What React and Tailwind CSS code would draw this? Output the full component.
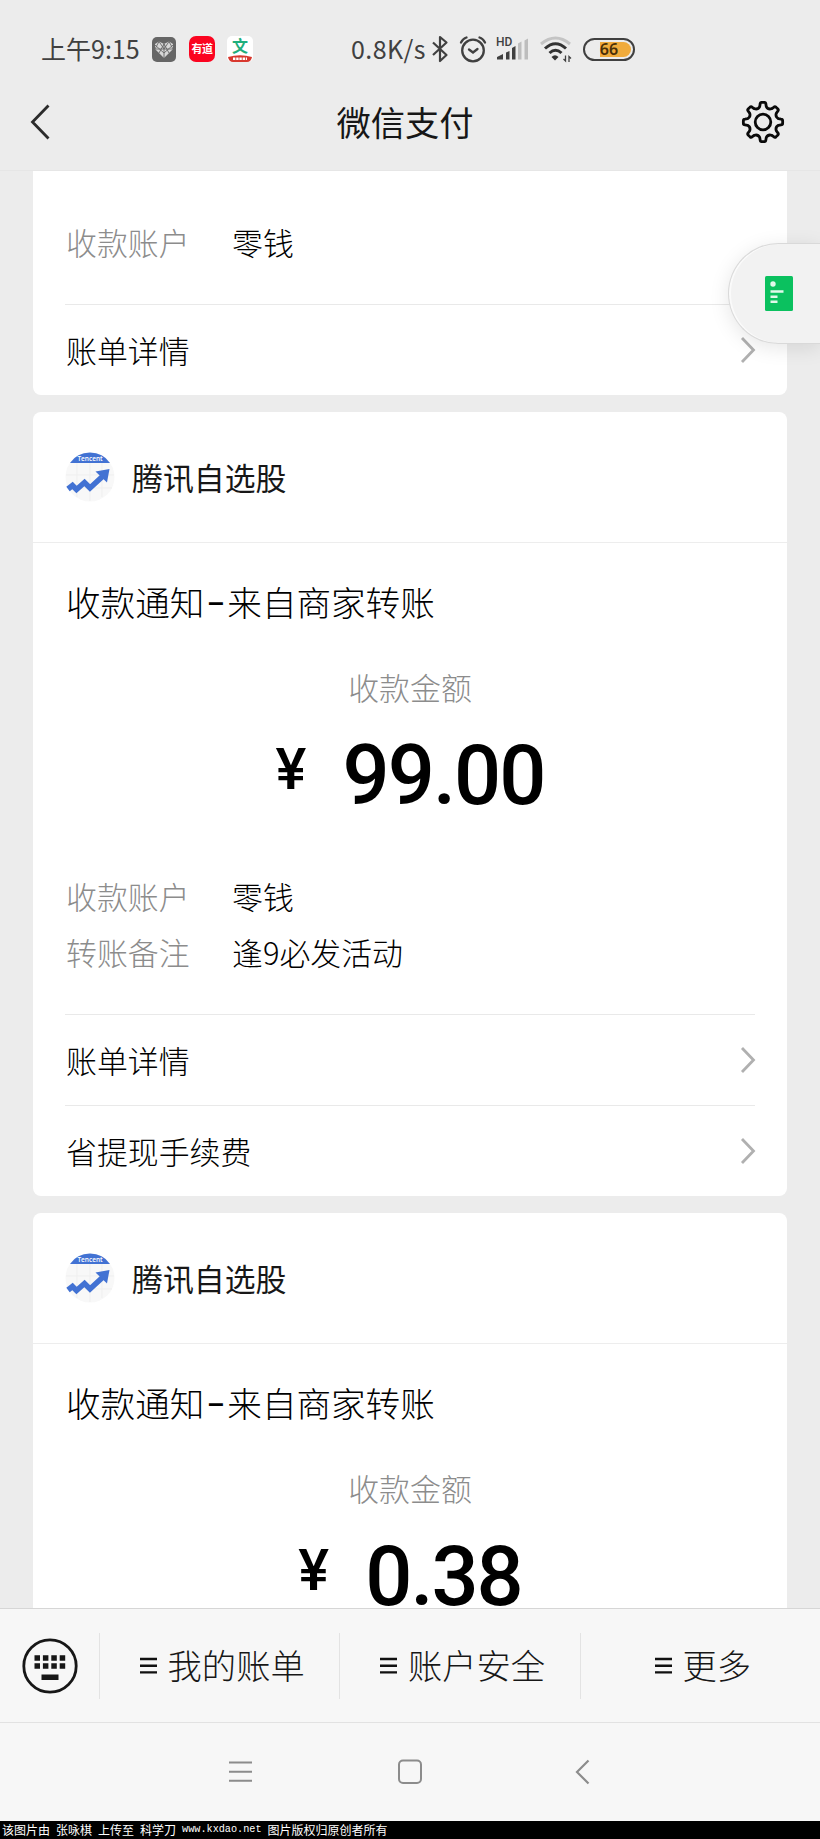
import React from 'react';

const GEAR_TEETH = [0, 45, 90, 135, 180, 225, 270, 315];

function polar(radius, degrees) {
    const a = (degrees * Math.PI) / 180;
    return `${(radius * Math.sin(a)).toFixed(2)} ${(-radius * Math.cos(a)).toFixed(2)}`;
}

const gearPath = GEAR_TEETH.map((deg, i) => (
    `${i === 0 ? 'M' : 'L'}${polar(18.2, deg - 9)} Q${polar(19.8, deg - 8)} ${polar(19.7, deg - 4)} L${polar(19.7, deg + 4)} Q${polar(19.8, deg + 8)} ${polar(18.2, deg + 9)} L${polar(15.8, deg + 12)} Q${polar(13.2, deg + 22.5)} ${polar(15.8, deg + 33)}`
)).join(' ') + ' Z';

function GearIcon() {
    return (
        <svg className="w-[44px] h-[44px]" viewBox="-22 -22 44 44" fill="none" stroke="#0a0a0a" strokeWidth="2.8" strokeLinejoin="round">
            <path d={gearPath} />
            <circle r="7.8" />
        </svg>
    );
}

function StatusBar() {
    return (
        <div className="h-[98px] shrink-0 flex items-center pl-[41px] text-[25px] text-[#404040] font-normal">
            <span className="w-[98px] whitespace-nowrap pb-[2px]">上午9:15</span>
            <svg className="w-[24px] h-[25px] ml-[13px]" viewBox="0 0 24 25">
                <rect width="24" height="25" rx="5" fill="#666" />
                <path d="M12 21 L3 12 V7 L7 4.500 L12 7 L17 4.500 L21 7 V12 Z" fill="#d8d8d8" />
                <path d="M3 12 L7 4.500 L12 12 L17 4.500 L21 12 M3 8 L12 16 L21 8 M7 16 L12 7 L17 16 M3 12 H21 M12 7 V21" stroke="#666" strokeWidth="0.9" fill="none" />
            </svg>
            <div className="w-[26px] h-[26px] ml-[13px] rounded-[7px] bg-[#fb0420] text-white text-[11px] font-bold leading-[25px] text-center tracking-[-0.5px]">有道</div>
            <div className="w-[26px] h-[26px] ml-[12px] rounded-[5px] bg-white flex flex-col items-center">
                <span className="h-[19px] text-[16px] font-bold leading-[19px] text-[#1fae7c]">文</span>
                <svg className="w-[26px] h-[7px]" viewBox="0 0 26 7">
                    <path d="M1 2 Q13 -1.500 25 2 Q24 7 20 7 H6 Q2 7 1 2" fill="#d8382e" />
                    <path d="M6 3.800 H20" stroke="#fff" strokeWidth="2.400" strokeDasharray="2.400 0.800" />
                </svg>
            </div>
            <span className="ml-[98px] w-[76px] whitespace-nowrap tracking-[0.4px] pb-[2px]">0.8K/s</span>
            <svg className="w-[18px] h-[28px] ml-[4px]" viewBox="0 0 18 28" fill="none" stroke="#404040" strokeWidth="2.200" strokeLinejoin="round">
                <path d="M2 7.500 L15.500 20 L9 26 V2 L15.500 7.500 L2 20" />
            </svg>
            <svg className="w-[28px] h-[28px] ml-[10px]" viewBox="0 0 28 28" fill="none" stroke="#404040" strokeWidth="2.300" strokeLinecap="round">
                <circle cx="14" cy="15.500" r="10.800" />
                <path d="M10 14.500 L14 17.500 L18.500 14" />
                <path d="M2 7.500 Q4 3.500 7.500 2.500 M26 7.500 Q24 3.500 20.500 2.500" />
            </svg>
            <svg className="w-[32px] h-[28px] ml-[9px]" viewBox="0 0 32 28">
                <text x="0" y="10.500" fontSize="12" fontWeight="500" fontFamily="Roboto, sans-serif" fill="#404040">HD</text>
                <path d="M1 24.500 V22 L7 19 V24.500 Z M10 24.500 V17.500 L13.500 16 V24.500 Z M16 24.500 V13 L19.500 11 V24.500 Z" fill="#404040" />
                <path d="M22 24.500 V8.500 L25.500 6.500 V24.500 Z M28.500 24.500 V5.500 L32 3.500 V24.500 Z" fill="#bdbdbd" />
            </svg>
            <svg className="w-[34px] h-[28px] ml-[11px]" viewBox="0 0 34 28" fill="none" strokeWidth="3">
                <path d="M2 9 Q16.500 -3 31 9" stroke="#c4c4c4" />
                <path d="M6 13.500 Q16.500 4 27 13.500 M10.500 18 Q16.500 12.500 22.500 18" stroke="#333" />
                <path d="M12.500 22 Q16 18.500 19.500 22 L16 25.500 Z" fill="#333" />
                <path d="M26.500 20.500 V26 L24.500 24 M30 27 V21.500 L32 23.500" stroke="#404040" strokeWidth="1.300" />
            </svg>
            <div className="relative ml-[10px] w-[52px] h-[23px] rounded-full border-2 border-[#404040] p-[2px] flex justify-end">
                <div className="w-[31px] h-full rounded-r-full bg-[#f0ab3c]"></div>
                <span className="absolute inset-0 text-center text-[16px] leading-[19px] font-semibold text-[#4a2f08] font-['Noto_Sans',sans-serif]">66</span>
            </div>
        </div>
    );
}

function TitleBar() {
    return (
        <div className="h-[72px] shrink-0 flex items-center justify-between pl-[29px] pr-[35px] pb-[24px]">
            <svg className="w-[40px] h-[40px]" viewBox="0 0 40 40" fill="none" stroke="#2b2b2b" strokeWidth="2.800">
                <path d="M19.500 3.500 L3.500 20 L19.500 36.500" />
            </svg>
            <h1 className="text-[34.3px] leading-[44px] pb-[3px] font-normal text-[#171717]">微信支付</h1>
            <GearIcon />
        </div>
    );
}

function LinkRow({ label }) {
    return (
        <div className="h-[91px] border-t border-[#e9e9e9] flex items-center justify-between">
            <span className="pl-px">{label}</span>
            <svg className="w-[16px] h-[28px] -mr-px" viewBox="0 0 16 28" fill="none" stroke="#b0b0b0" strokeWidth="2.800">
                <path d="M2 2 L13.500 14 L2 26" />
            </svg>
        </div>
    );
}

function Field({ label, value }) {
    return (
        <div className="h-[56px] flex items-center pl-px">
            <span className="w-[166px] text-[#8c8c8c]">{label}</span>
            <span>{value}</span>
        </div>
    );
}

function StockLogo() {
    return (
        <svg className="w-[50px] h-[50px]" viewBox="0 0 50 50">
            <circle cx="25" cy="25" r="24.500" fill="#f8f8f8" />
            <path d="M12 11 V45 M25 11 V49 M37 11 V45 M1 23 H49 M3 36 H47" stroke="#efefef" strokeWidth="1" />
            <path d="M5 11 Q12 0.500 25 0.500 Q38 0.500 45 11 Z" fill="#4272d3" />
            <text x="25" y="8.500" fontSize="6.500" fontWeight="600" textAnchor="middle" fill="#fff" fontFamily="Open Sans, sans-serif">Tencent</text>
            <path d="M3 37 L7.500 33.500 L11.500 37.500 L19.500 30.500 L25 36 L38 24" fill="none" stroke="#4272d3" strokeWidth="5.500" />
            <path d="M30.500 19.500 L44.500 17 L42 30.500 Z" fill="#4272d3" />
        </svg>
    );
}

function PaymentCard({ amount, children }) {
    return (
        <section className="shrink-0 bg-white rounded-lg">
            <div className="h-[131px] border-b border-[#ededed] flex items-center gap-[17px] px-[32px]">
                <StockLogo />
                <span className="font-normal text-[#171717]">腾讯自选股</span>
            </div>
            <div className="px-[32px]">
                <h2 className="mt-[33px] h-[50px] leading-[50px] text-[34.600px] pl-px">
                    收款通知<span className="inline-block w-[23px] text-center font-['Inter',sans-serif] text-[46px] leading-none translate-y-[2px]">-</span>来自商家转账
                </h2>
                <p className="mt-[38px] h-[46px] leading-[46px] text-center text-[#8c8c8c]">收款金额</p>
                <div className="mt-[35px] h-[62px] flex justify-center font-['Roboto',sans-serif] font-medium text-black">
                    <span className="w-[67px] text-[58px] leading-[48px]">¥</span>
                    <span className="text-[83px] leading-[62px] tracking-[-2px]">{amount}</span>
                </div>
                {children}
            </div>
        </section>
    );
}

function FloatingNote() {
    return (
        <div className="absolute right-0 top-[243px] w-[92px] h-[101px] rounded-l-full bg-[#f2f2f2] border border-r-0 border-[#d9d9d9] shadow-[0_4px_20px_rgba(0,0,0,0.1),inset_2px_0_0_#fafafa] flex items-center pl-[36px]">
            <svg className="w-[28px] h-[35px]" viewBox="0 0 28 35">
                <rect width="28" height="35" rx="1.500" fill="#0bc15f" />
                <circle cx="8" cy="8" r="2.700" fill="#e0f9ea" />
                <path d="M5.500 15.500 H18.500 M5.500 20.700 H12.500 M5.500 25.800 H12.500" stroke="#e0f9ea" strokeWidth="2.600" />
            </svg>
        </div>
    );
}

function BottomMenu() {
    const items = ['我的账单', '账户安全', '更多'];

    return (
        <div className="h-[114px] shrink-0 border-t border-[#d6d6d6] flex items-center">
            <div className="w-[99px] flex justify-center">
                <svg className="w-[56px] h-[56px]" viewBox="0 0 56 56">
                    <circle cx="28" cy="28" r="26.200" fill="none" stroke="#171717" strokeWidth="2.800" />
                    <path d="M12.500 20 H43.500 M12.500 28 H43.500" stroke="#171717" strokeWidth="5.400" strokeDasharray="5.500 2.900" />
                    <rect x="19.500" y="36.500" width="17" height="5.500" fill="#171717" />
                </svg>
            </div>
            {items.map((item) => (
                <div key={item} className="flex-1 h-[66px] border-l border-[#e3e3e3] flex items-center justify-center gap-[11px] pl-[5px]">
                    <svg className="w-[17px] h-[17px]" viewBox="0 0 17 17" stroke="#111" strokeWidth="2.400">
                        <path d="M0 2 H17 M0 8.700 H17 M0 15.400 H17" />
                    </svg>
                    <span className="text-[34.300px] leading-[46px] pb-[3px] text-[#171717]">{item}</span>
                </div>
            ))}
        </div>
    );
}

function SystemNav() {
    return (
        <div className="h-[99px] shrink-0 border-t border-[#e2e2e2] flex items-center justify-center gap-[144px] text-[#8c8c8c]">
            <svg className="w-[26px] h-[26px]" viewBox="0 0 26 26" stroke="currentColor" strokeWidth="2">
                <path d="M2 3.500 H25 M2 12.700 H25 M2 21.800 H25" />
            </svg>
            <svg className="w-[26px] h-[26px]" viewBox="0 0 26 26" fill="none" stroke="currentColor" strokeWidth="2">
                <rect x="2" y="1.500" width="22" height="22.500" rx="4" />
            </svg>
            <svg className="w-[26px] h-[26px]" viewBox="0 0 26 26" fill="none" stroke="currentColor" strokeWidth="2.200">
                <path d="M21.500 1.500 L10 13 L21.500 24.500" />
            </svg>
        </div>
    );
}

export default function App() {
    return (
        <div className="relative w-[820px] h-[1839px] flex flex-col overflow-hidden bg-[#ececec] font-['Noto_Sans_CJK_SC',sans-serif] font-light text-[30.900px] leading-[46px] text-black">
            <StatusBar />
            <TitleBar />

            <main className="flex-1 min-h-0 overflow-hidden border-t border-[#e6e6e6] px-[33px] flex flex-col gap-[17px]">
                <section className="shrink-0 bg-white rounded-b-lg px-[32px] pt-[43px]">
                    <Field label="收款账户" value="零钱" />
                    <div className="pt-[34px]">
                        <LinkRow label="账单详情" />
                    </div>
                </section>

                <PaymentCard amount="99.00">
                    <div className="pt-[61px] pb-[34px]">
                        <Field label="收款账户" value="零钱" />
                        <Field label="转账备注" value="逢9必发活动" />
                    </div>
                    <LinkRow label="账单详情" />
                    <LinkRow label="省提现手续费" />
                </PaymentCard>

                <PaymentCard amount="0.38">
                    <div className="h-[60px]"></div>
                </PaymentCard>
            </main>

            <footer className="shrink-0 bg-[#f7f7f7]">
                <BottomMenu />
                <SystemNav />
            </footer>
            <div className="h-[18px] shrink-0 bg-black text-white font-normal text-[12px] leading-[17px] pl-[2px] flex gap-[6px] whitespace-nowrap">
                <span>该图片由</span>
                <span>张咏棋</span>
                <span>上传至</span>
                <span>科学刀</span>
                <span className="font-['Liberation_Mono',monospace] text-[10.200px]">www.kxdao.net</span>
                <span>图片版权归原创者所有</span>
            </div>

            <FloatingNote />
        </div>
    );
}
